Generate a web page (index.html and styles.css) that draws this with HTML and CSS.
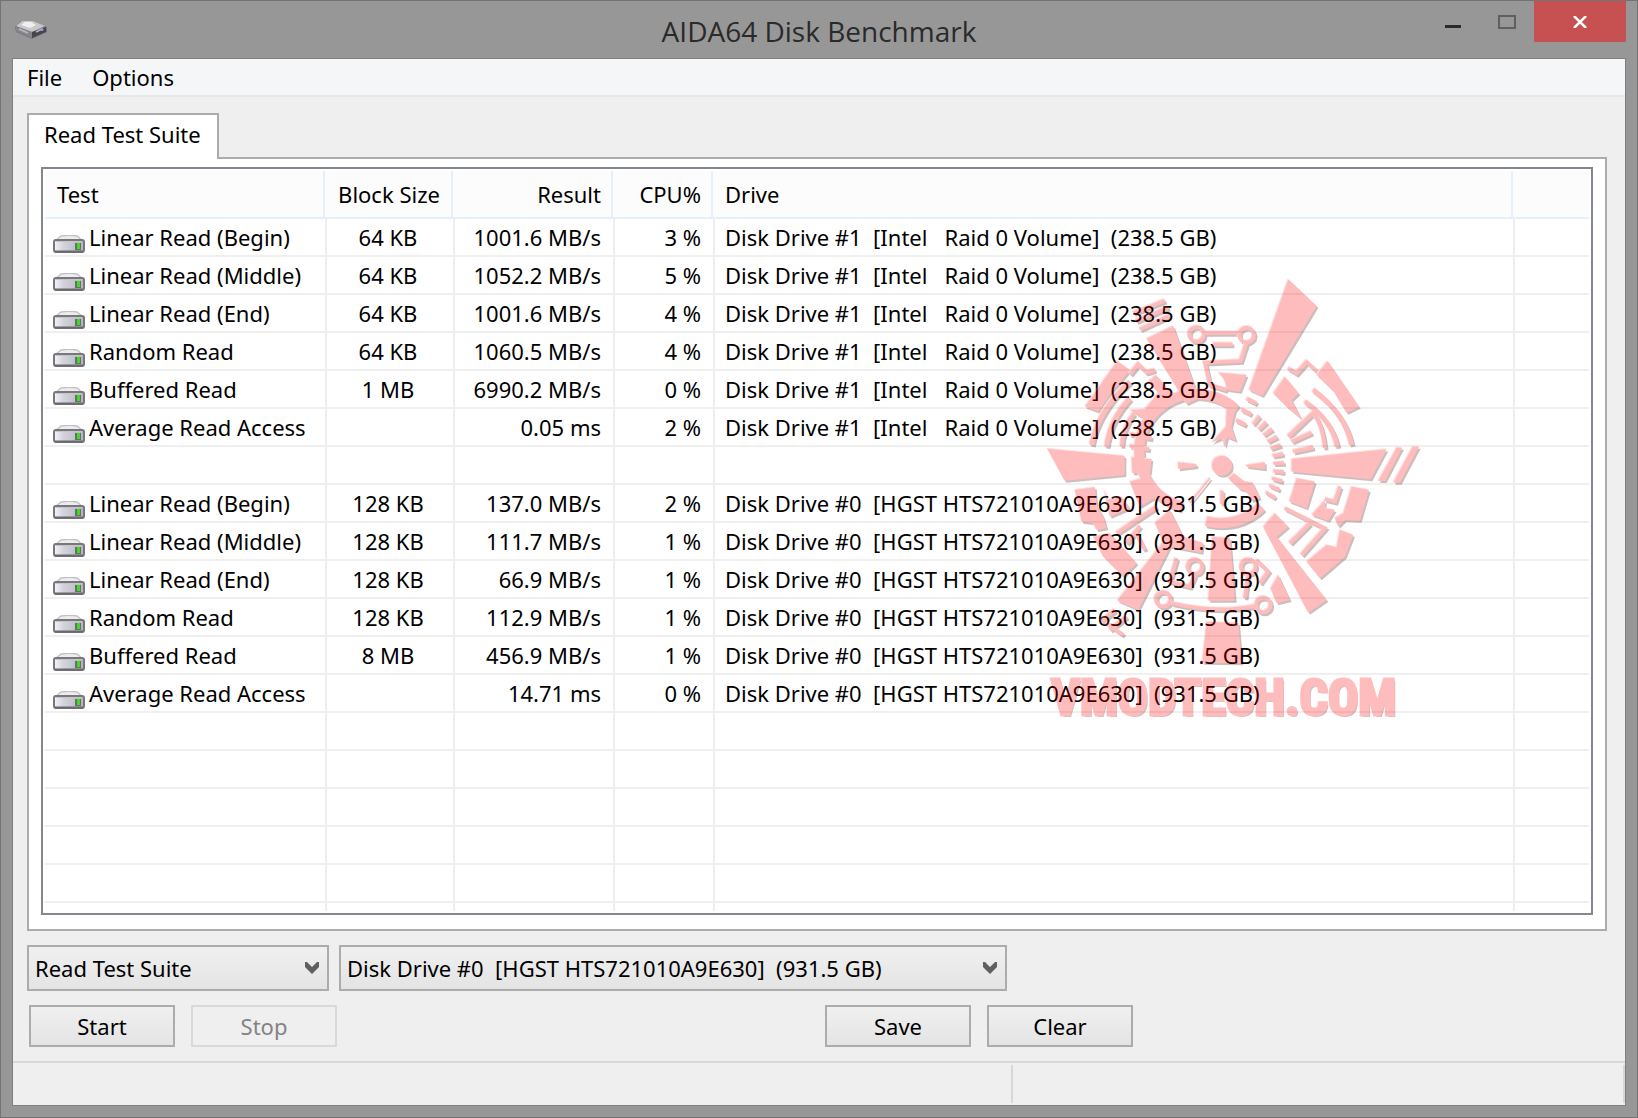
FILE: index.html
```html
<!DOCTYPE html>
<html lang="en">
<head>
<meta charset="utf-8">
<title>AIDA64 Disk Benchmark</title>
<link rel="stylesheet" href="styles.css">
</head>
<body>
<svg class="defs" aria-hidden="true">
  <defs>
    <linearGradient id="face" x1="0" y1="0" x2="1" y2="0"><stop offset="0" stop-color="#f4f4f8"/><stop offset=".3" stop-color="#d4d4de"/><stop offset="1" stop-color="#b4b4ba"/></linearGradient>
    <symbol id="disk" viewBox="0 0 32 18">
      <path d="M2 6 L8 1 Q16 -.5 24 1 L30 6Z" fill="#ededed" stroke="#c2c2c6" stroke-width="1.4"/>
      <rect x="1" y="5" width="30" height="12" rx="2" fill="url(#face)" stroke="#77777c" stroke-width="2"/>
      <path d="M3 6.5H29" stroke="#c6c6ca"/>
      <path d="M2 16.5H30" stroke="#68686e" stroke-width="2"/>
      <rect x="22" y="8" width="6" height="7" fill="#66706a"/>
      <rect x="24" y="8" width="3" height="6" fill="#45d81e"/>
    </symbol>
  </defs>
</svg>
<div class="window">
  <header class="titlebar">
    <svg class="app-icon" viewBox="0 0 32 20" aria-hidden="true">
      <path d="M0 7 L6 1 L18 1 L32 7 L32 12 L17 19 L1 12Z" fill="#77777b"/>
      <path d="M1 6 L7 1 L18 1 L30 6 L17 12Z" fill="#c8c8c8"/>
      <path d="M6 5 L10 2 L16 2 L21 5 L15 8Z" fill="#f0f0f0"/>
      <path d="M17 12 L31 7 L31 12 L17 18Z" fill="#46464c"/>
      <path d="M1 7 L17 12 L17 18 L1 11Z" fill="#86868a"/>
      <path d="M4 9 L13 13 M21 12 L27 9" stroke="#b8b8c2" stroke-width="1.5"/>
      <circle cx="27" cy="9.500" r="1.500" fill="#9c9cd8"/>
    </svg>
    <h1 class="title">AIDA64 Disk Benchmark</h1>
    <div class="controls">
      <button class="ctl" type="button" aria-label="Minimize"><svg width="16" height="3"><rect width="16" height="3" fill="#2a2a2a"/></svg></button>
      <button class="ctl" type="button" aria-label="Maximize" disabled><svg width="18" height="14"><rect x="1" y="1" width="16" height="12" fill="none" stroke="#5f5f5f" stroke-width="2"/></svg></button>
      <button class="ctl close" type="button" aria-label="Close"><svg width="14" height="12"><path d="M1 0 L13 12 M13 0 L1 12" stroke="#fff" stroke-width="2.500"/></svg></button>
    </div>
  </header>
  <div class="client">
    <nav class="menubar"><button type="button">File</button><button type="button">Options</button></nav>
    <main class="content">
      <div class="tabs"><button class="tab" type="button">Read Test Suite</button></div>
      <section class="panel">
        <div class="list">
          <table>
            <colgroup><col class="c-test"><col class="c-block"><col class="c-result"><col class="c-cpu"><col class="c-drive"><col></colgroup>
            <thead><tr><th>Test</th><th class="mid">Block Size</th><th class="num">Result</th><th class="num">CPU%</th><th>Drive</th><th></th></tr></thead>
            <tbody id="rows"></tbody>
          </table>
          <div class="watermark">
            <svg viewBox="0 0 1200 1230" aria-hidden="true">
              <defs><g id="emblem">
                <path stroke="none" d="M775 58L860 138L697 408L657 390Z M350 236L430 198L507 415L470 432Z M565 338L650 345L630 395L590 390Q590 360 565 338Z M590 436L620 432L604 500L618 542L592 532L584 562L578 535L545 548L588 500Z M595 655L612 640L645 665L668 668L690 715L665 722Q655 690 630 688Z M445 607L500 613V621L445 628Z M650 615L705 607V628L650 621Z M571 692H581V733H571Z M52 566L284 588V645L104 662Z M305 592H325L322 640H307Z M345 597H365L360 640H347Z M785 597L1070 568L1022 658L785 635Z M1100 563H1117L1065 663H1045Z M1148 560H1167L1110 668H1090Z
                M165 440L262 303L300 330L235 410L205 455Z M300 450L350 482L425 400L378 345L355 365L385 398L345 448Z M893 303L987 440L950 458L912 395L860 345Z M730 400L765 350L806 400L785 420L815 478L770 440Z
                M135 690L195 682L200 735L220 770L230 805L200 810L190 790L155 785Z M300 665L350 650L372 715L330 740Z M220 680L232 720L275 710L300 745L240 770Z M190 830L240 820L320 910L280 950L220 890Z
                M375 790L420 750L460 830L520 850L515 878L420 860L325 1050L262 1022L400 845Z M700 800L735 760L775 800L740 830L890 1020L835 1058L715 830Z
                M800 655L855 665L830 745L778 725Z M965 680L1017 690L990 782L945 780L925 800L915 775L940 760Z M845 765L885 720L885 745L915 750L895 782Z M970 825L945 890L870 955L830 905L890 855L920 862L930 810Z
                M547 830L600 835L615 1022H535Z M530 1085L625 1090L635 1210L517 1208Z M745 945L780 1020L740 1030L722 985Z"/>
                <circle cx="576" cy="617" r="30" stroke="none"/>
                <g fill="none" stroke-width="11">
                  <path d="M310 160L405 122M318 184L415 143M330 208L418 168M522 219H628M650 248L632 303L525 308L540 375L590 390M550 253H608M300 343L325 312L350 337L375 330M275 560Q280 500 312 460M300 522L365 535M300 558L358 568M775 325L800 340L830 306L862 335M775 530L850 458Q880 500 885 565M785 545L845 518M790 575L850 562M260 820L380 740M290 850L330 798M345 870L315 812M765 745L885 805L815 885M780 850L840 790M930 680L915 725L885 718M425 1030Q560 1062 675 1038M440 895L420 965L480 980L495 945M655 940L645 1015M680 900L715 935L690 970M215 1085L255 1050M230 1090L280 1125M240 1110L290 1070"/>
                  <path stroke-width="14" d="M185 555Q205 450 300 365M230 560Q240 480 300 415M850 390Q945 460 965 555M825 425Q905 480 922 560"/>
                  <path stroke-width="5" d="M540 655L480 730"/>
                  <circle cx="500" cy="223" r="22"/><circle cx="650" cy="225" r="22"/><circle cx="495" cy="920" r="22"/><circle cx="655" cy="920" r="22"/><circle cx="400" cy="1018" r="22"/><circle cx="700" cy="1035" r="22"/>
                  <path stroke-width="30" d="M618 449A172 172 0 1 0 455 740M529 784A172 172 0 0 0 694 740"/>
                  <path stroke-width="32" stroke-dasharray="10 15" d="M675 478A170 170 0 0 1 712 720"/>
                  <path stroke-width="32" stroke-dasharray="12 24" d="M668 418L622 510"/>
                </g>
              </g></defs>
              <g opacity=".26">
                <use href="#emblem" transform="translate(5 6)" fill="#460505" stroke="#460505"/>
                <use href="#emblem" transform="translate(-3 -3)" fill="#ff8a8a" stroke="#ff8a8a"/>
                <use href="#emblem" fill="#f00" stroke="#f00"/>
              </g>
            </svg>
            <span>VMODTECH.COM</span>
          </div>
        </div>
      </section>
      <div class="selectors">
        <select class="suite" aria-label="Test suite"><option>Read Test Suite</option></select>
        <select class="drive" aria-label="Drive"><option>Disk Drive #0&nbsp; [HGST HTS721010A9E630]&nbsp; (931.5 GB)</option></select>
      </div>
      <div class="actions">
        <button type="button">Start</button><button type="button" disabled>Stop</button>
        <button class="save" type="button">Save</button><button type="button">Clear</button>
      </div>
    </main>
    <footer class="status"><div class="status-main"></div><div class="status-side"></div></footer>
  </div>
</div>
<script src="rows.js"></script>
</body>
</html>
```
FILE: rows.js
```js
const raid = 'Disk Drive #1  [Intel   Raid 0 Volume]  (238.5 GB)';
const hgst = 'Disk Drive #0  [HGST HTS721010A9E630]  (931.5 GB)';
const results = [
  ['Linear Read (Begin)', '64 KB', '1001.6 MB/s', '3 %', raid],
  ['Linear Read (Middle)', '64 KB', '1052.2 MB/s', '5 %', raid],
  ['Linear Read (End)', '64 KB', '1001.6 MB/s', '4 %', raid],
  ['Random Read', '64 KB', '1060.5 MB/s', '4 %', raid],
  ['Buffered Read', '1 MB', '6990.2 MB/s', '0 %', raid],
  ['Average Read Access', '', '0.05 ms', '2 %', raid],
  [],
  ['Linear Read (Begin)', '128 KB', '137.0 MB/s', '2 %', hgst],
  ['Linear Read (Middle)', '128 KB', '111.7 MB/s', '1 %', hgst],
  ['Linear Read (End)', '128 KB', '66.9 MB/s', '1 %', hgst],
  ['Random Read', '128 KB', '112.9 MB/s', '1 %', hgst],
  ['Buffered Read', '8 MB', '456.9 MB/s', '1 %', hgst],
  ['Average Read Access', '', '14.71 ms', '0 %', hgst],
  [], [], [], [], []
];
const icon = '<svg class="disk" aria-hidden="true"><use href="#disk"/></svg>';
const classes = ['name', 'mid', 'num', 'num', '', ''];
document.getElementById('rows').innerHTML = results.map(r =>
  '<tr>' + classes.map((c, i) =>
    `<td class="${c}">${i === 0 && r[0] ? icon : ''}${r[i] || ''}</td>`).join('') + '</tr>'
).join('') + '<tr class="rest">' + '<td></td>'.repeat(6) + '</tr>';
```
FILE: styles.css
```css
* { box-sizing: border-box; }
body { margin: 0; font: 22px/36px "Noto Sans", "Open Sans", sans-serif; color: #000; }
button, select { font: inherit; color: inherit; margin: 0; }
.defs { position: absolute; width: 0; height: 0; }

.window { min-height: 100vh; display: flex; flex-direction: column; padding: 0 11px 11px; background: #979797; border: 1px solid #737373; }
.titlebar { height: 57px; display: grid; grid-template-columns: 1fr auto 1fr; align-items: center; }
.app-icon { width: 32px; height: 20px; margin-left: 3px; }
.title { margin: 2px 0 0; font: 400 28px/40px "Open Sans", "Noto Sans", sans-serif; color: #2a2a2a; }
.controls { display: flex; justify-content: flex-end; align-self: start; }
.ctl { width: 54px; height: 41px; padding: 0; border: 0; background: none; display: grid; place-items: center; }
.ctl svg { display: block; }
.ctl:first-child { padding-top: 10px; }
.ctl.close { width: 92px; background: #c75050; }

.client { flex: 1; display: flex; flex-direction: column; border: 1px solid #7f7f7f; background: #efefef; }
.menubar { display: flex; gap: 30px; height: 38px; padding: 0 14px; background: #f4f6f8; border-bottom: 2px solid #e7e8e9; }
.menubar button { border: 0; padding: 0; background: none; }

.content { flex: 1; display: flex; flex-direction: column; padding: 16px 18px 14px 14px; }
.tabs { display: flex; }
.tab { position: relative; z-index: 1; height: 46px; margin-bottom: -2px; padding: 0 16px 6px 15px; border: 2px solid #acacac; border-bottom: 0; background: #fff; }
.panel { flex: 1; padding: 8px 12px 14px; background: #fff; border: 2px solid #acacac; display: flex; }
.list { flex: 1; position: relative; padding: 2px; border: 2px solid #828790; overflow: hidden; }

table { width: 100%; table-layout: fixed; border-collapse: separate; border-spacing: 0; }
.c-test { width: 282px; } .c-block { width: 128px; } .c-result { width: 160px; } .c-cpu { width: 100px; } .c-drive { width: 800px; }
th { height: 48px; padding: 0 14px 0 10px; font-weight: 400; text-align: left; white-space: nowrap; border-bottom: 2px solid #e6f0fd; background: linear-gradient(#e6f0fd, #e6f0fd) right 2px top / 2px 100% no-repeat #fcfcfc; }
th:first-child { padding-left: 12px; }
th:last-child { background: #fcfcfc; }
td { height: 38px; padding: 0 12px 0 10px; white-space: pre; border-right: 2px solid #efefef; border-bottom: 2px solid #efefef; }
td:last-child { border-right: 0; }
td.name { padding-left: 8px; }
.mid { text-align: center; padding: 0 4px 0 0; }
.num { text-align: right; }
.rest td { height: 8px; border-bottom: 0; }
.disk { width: 32px; height: 18px; margin-right: 4px; vertical-align: -7px; }

.watermark { position: absolute; left: 987px; top: 91px; width: 400px; pointer-events: none; }
.watermark svg { display: block; width: 400px; height: 410px; }
.watermark span { display: block; padding-left: 21px; margin-top: -2px; font: 700 50px/60px "Roboto Condensed", "Liberation Sans Narrow", sans-serif; color: #f00; opacity: .26; -webkit-text-stroke: 3px #f00; text-shadow: 2px 2px #460505; }

.selectors { display: flex; gap: 10px; margin-top: 14px; }
select { appearance: none; height: 46px; padding: 0 6px; border: 2px solid #acacac; border-radius: 0; color: #000; background: url("data:image/svg+xml,%3Csvg xmlns='http://www.w3.org/2000/svg' width='14' height='12'%3E%3Cpath d='M0 0H2L7 5L12 0H14V5L7 12L0 5Z' fill='%23606060'/%3E%3C/svg%3E") right 8px center no-repeat, linear-gradient(#f0f0f0, #e4e4e4); }
.suite { width: 302px; }
.drive { width: 668px; }
.actions { display: flex; gap: 16px; margin: 14px 0 0 2px; }
.actions button { width: 146px; height: 42px; padding: 0; line-height: 38px; border: 2px solid #acacac; background: linear-gradient(#f0f0f0, #e4e4e4); }
.actions button:disabled { color: #838383; border-color: #d9d9d9; background: #efefef; }
.actions .save { margin-left: 472px; }

.status { height: 44px; display: grid; grid-template-columns: 1000px 1fr; padding: 2px 0; border-top: 2px solid #d7d7d7; }
.status div { border-right: 2px solid #d7d7d7; }
```
